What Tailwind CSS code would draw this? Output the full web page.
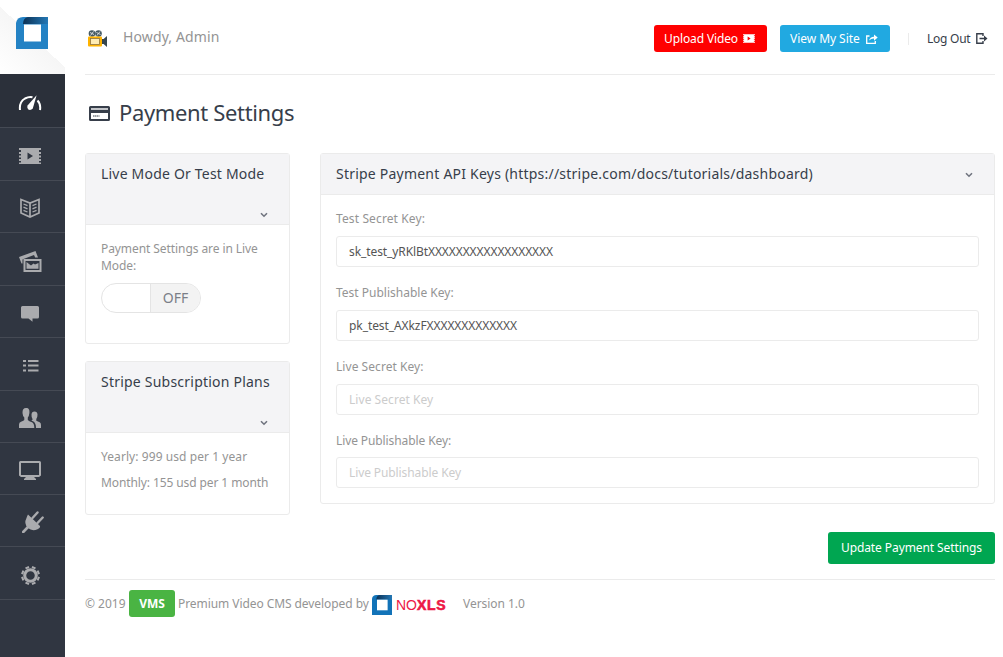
<!DOCTYPE html>
<html lang="en">
<head>
<meta charset="utf-8">
<title>Payment Settings</title>
<script src="https://cdn.jsdelivr.net/npm/@tailwindcss/browser@4"></script>
</head>
<body class="h-[657px] overflow-hidden bg-white font-['Noto_Sans',sans-serif] text-[12px] leading-[17px] text-[#949494]">
<svg class="absolute size-0">
  <defs>
    <linearGradient id="fold" x1="0" y1="0" x2="1" y2="0"><stop offset="0" stop-color="#0b3155"/><stop offset="1" stop-color="#2478b5"/></linearGradient>
    <symbol id="chev" viewBox="0 0 8 6"><path d="M1 1.2 4 4.2 7 1.2" fill="none" stroke="#70747f" stroke-width="1.6"/></symbol>
    <symbol id="logo" viewBox="0 0 32 32"><path d="M7 0H32V32H0V6Q1 0 7 0Z" fill="currentColor"/><path d="M12 0H32V7H7Q7 1 12 0Z" fill="url(#fold)"/><path d="M8 7.5H25V24.5H8Z" fill="#fff"/></symbol>
    <symbol id="film" viewBox="0 0 22 16"><path fill="currentColor" fill-rule="evenodd" d="M0 0H22V2H20V4H22V6H20V7.500H22V9.500H20V11H22V13H20V14.500H22V16H0V14.500H2V13H0V11H2V9.500H0V7.500H2V6H0V4H2V2H0ZM8.500 4.500V11.500L14 8Z"/></symbol>
  </defs>
</svg>
<div class="flex h-full">
  <aside class="flex w-[65px] shrink-0 flex-col bg-[#303641] text-[#aaabae]">
    <div class="h-[74px] bg-white bg-[linear-gradient(43deg,#fff_0%,#f6f6f6_50%,#fff_50%)] pt-[17px] pl-4"><svg class="size-8 text-[#2482c4]"><use href="#logo"/></svg></div>
    <nav>
      <a class="flex h-[54px] items-center border-b border-[#454a54] bg-[#2b303a] pt-[5px] pl-[18px] text-white"><svg class="h-[16px] w-[24px]" viewBox="0 0 24 16" fill="none" stroke="currentColor" stroke-width="2"><path d="M2 15Q1 7 7 3.500Q11 1.300 14.500 2.200"/><path d="M19.500 5.500Q23 9 22 15"/><path d="M18.600 .3 14.800 13.500Q12.500 16 10 14.300Q8.300 12.500 9.800 10.300Z" fill="currentColor" stroke="none"/></svg></a>
      <a class="flex h-[53px] items-center border-b border-[#454a54] pt-[4px] pl-[19px]"><svg class="h-4 w-[22px]"><use href="#film"/></svg></a>
      <a class="flex h-[52px] items-center border-b border-[#454a54] pt-[3px] pl-[20px]"><svg class="h-[20px] w-[20px]" viewBox="0 0 20 20" fill="none" stroke="currentColor" stroke-width="1.700"><path d="M1 1.500 10 5 19 1.500V15L10 19 1 15ZM10 5V19"/><path d="M3.500 6 7.500 7.600M3.500 9.200 7.500 10.800M3.500 12.400 7.500 14M16.500 6 12.500 7.600M16.500 9.200 12.500 10.800M16.500 12.400 12.500 14" stroke-width="1.300"/></svg></a>
      <a class="flex h-[53px] items-center border-b border-[#454a54] pt-[4px] pl-[19px]"><svg class="h-[21px] w-[23px]" viewBox="0 0 23 21"><path fill="currentColor" d="M0 6 16.500 0 19 6.500H16.200L15 4 4.500 8 3.500 8.500V12.500H2.500Z"/><path fill="currentColor" fill-rule="evenodd" d="M4.500 8H22.500V21H4.500ZM6.500 10V19H20.500V10Z"/><path fill="currentColor" d="M7.500 11 10 13 12 14.500 14.500 12.500 16 13.500 19.500 12V17.800H7.500Z"/></svg></a>
      <a class="flex h-[52px] items-center border-b border-[#454a54] pt-[4px] pl-[21px]"><svg class="h-[16px] w-[18px]" viewBox="0 0 18 16" fill="currentColor"><path d="M1.500 0H16.500Q18 0 18 1.500V11Q18 12.500 16.500 12.500H11.500V15.700L7.500 12.500H1.500Q0 12.500 0 11V1.500Q0 0 1.500 0Z"/></svg></a>
      <a class="flex h-[53px] items-center border-b border-[#454a54] pt-[3px] pl-[23px]"><svg class="h-[12px] w-[16px]" viewBox="0 0 16 12" fill="currentColor"><path d="M0 0H3V2H0ZM5 0H15.500V2H5ZM0 4.500H3V6.500H0ZM5 4.500H15.500V6.500H5ZM0 9.500H3V11.500H0ZM5 9.500H15.500V11.500H5Z"/></svg></a>
      <a class="flex h-[52px] items-center border-b border-[#454a54] pt-[3px] pl-[19px]"><svg class="h-[20px] w-[22px]" viewBox="0 0 22 20" fill="currentColor"><path d="M7 0C10 0 10.700 2 10.400 5Q10 8.500 8.800 9.500V12Q10 13.300 13 14.300Q15.300 15.200 15.300 20H0V16.500Q0 14.500 2 13.800Q5 12.800 5.300 12V9.500Q3.700 8 3.500 5Q3.300 0 7 0Z"/><path d="M12.300 12.500Q13.500 12 13.600 11.300Q12.300 9.500 12.500 6.500Q12.700 3.500 15.500 3.500T18.500 6.500Q18.600 9.500 17.300 11V12.700L20.700 14.300Q22 15 22 17V20H17Q17 15 14.500 13.500Z"/></svg></a>
      <a class="flex h-[52px] items-center border-b border-[#454a54] pt-[3px] pl-[19px]"><svg class="h-[19px] w-[22px]" viewBox="0 0 22 19" fill="currentColor"><path fill-rule="evenodd" d="M1.500 0H20.500Q22 0 22 1.500V14.500L20 16H15L17 18V19H5V18L7 16H2L0 14.500V1.500Q0 0 1.500 0ZM2 2V14H20V2Z"/></svg></a>
      <a class="flex h-[52px] items-center border-b border-[#454a54] pt-[3px] pl-[22px]"><svg class="size-[22px]" viewBox="0 0 22 22" fill="none" stroke="currentColor" stroke-linecap="round"><path d="M6 3.500 18 15Q18.500 17 15.500 18.300 10 20.500 6 17 1.500 12.500 4.500 7 5 5 6 3.500Z" fill="currentColor" stroke="none"/><path d="M10.500 7 15.500 1.500M15.500 12 20.700 6.500" stroke-width="2.400"/><path d="M1.200 21 6 16" stroke-width="2.600"/></svg></a>
      <a class="flex h-[53px] items-center border-b border-[#454a54] pt-[5px] pl-[21px]"><svg class="size-[19px]" viewBox="-10 -10 20 20" fill="none" stroke="currentColor"><circle r="6.100" stroke-width="3.200"/><path stroke-width="4" d="M3 -7.200 3.800 -9.200M7.200 -3 9.200 -3.800M7.200 3 9.200 3.800M3 7.200 3.800 9.200M-3 7.200-3.800 9.200M-7.200 3-9.200 3.800M-7.200-3-9.200-3.800M-3-7.200-3.800-9.200"/></svg></a>
    </nav>
  </aside>
  <main class="ml-5 flex w-[910px] flex-col">
    <header class="flex h-[75px] items-start border-b border-[#ebebeb]">
      <svg class="mt-[30px] ml-[3px] h-[17px] w-[20px]" viewBox="0 0 20 17"><path fill="#37474f" d="M19 6V17L15 13.500V9.500ZM14 9H16V14H14Z"/><circle cx="4" cy="3.500" r="3.300" fill="#455a64"/><circle cx="10.500" cy="3.500" r="3.300" fill="#455a64"/><path stroke="#d5d9db" stroke-width="1" d="M2 2.500 6 4.500M5.500 1.500 2.500 5.500M8.500 2.500 12.500 4.500M12 1.500 9 5.500"/><rect x="0" y="6.500" width="14" height="10" rx="1" fill="#ffb300"/><rect x="2.500" y="8.500" width="9" height="6" fill="#ffecb3" stroke="#8d7442" stroke-width=".8"/></svg>
      <span class="mt-[27px] ml-[15px] text-[14px] leading-[20px] tracking-[0.12px]">Howdy, Admin</span>
      <div class="ml-auto flex items-center pt-[25px]">
        <a class="flex h-[27px] w-[113px] items-center rounded-[3px] bg-[#f00] pl-[10px] tracking-[-0.12px] text-white">Upload Video<svg class="ml-[5px] h-[9px] w-[12px]"><use href="#film"/></svg></a>
        <a class="ml-[13px] flex h-[27px] w-[110px] items-center rounded-[3px] bg-[#21a9e1] pl-[10px] tracking-[-0.05px] text-white">View My Site<svg class="ml-[6px] h-[10px] w-[12px]" viewBox="0 0 12 10" fill="none" stroke="currentColor" stroke-width="1.300"><path d="M3.500 2H.7V9.300H9.300V7"/><path d="M3 6.500Q4 2.700 8 2.700V.5L11.700 3.600 8 6.700V4.500Q5 4.500 3 6.500Z" fill="currentColor" stroke="none"/></svg></a>
        <span class="ml-[18px] h-3 w-px bg-[#ebebeb]"></span>
        <a class="ml-[18px] flex w-[68px] items-center tracking-[-0.25px] text-[#373e4a]">Log Out<svg class="ml-[6px] h-[11px] w-[12px]" viewBox="0 0 12 11" fill="none" stroke="currentColor" stroke-width="1.400"><path d="M7 3V.8H.8V10.200H7V8"/><path d="M3.500 4.700H8V2.500L11.500 5.500 8 8.500V6.300H3.500Z" fill="currentColor" stroke="none"/></svg></a>
      </div>
    </header>
    <h2 class="mt-[22px] flex h-[30px] items-center pl-1 text-[22px] leading-[30px] tracking-[-0.35px] text-[#373e4a]"><svg class="mt-[3px] mr-[9px] h-[15px] w-[21px]" viewBox="0 0 21 15"><path fill="currentColor" fill-rule="evenodd" d="M1.500 0H19.500Q21 0 21 1.500V13.500Q21 15 19.500 15H1.500Q0 15 0 13.500V1.500Q0 0 1.500 0ZM2 2V4H19V2ZM2 7V13H19V7Z"/><path fill="#c3c5c9" d="M2 2H19V4H2Z"/><path stroke="currentColor" stroke-width="1" d="M4 10H10.500" stroke-dasharray="1.500 .4"/></svg>Payment Settings</h2>
    <div class="mt-[26px] flex items-start gap-[30px]">
      <div class="flex w-[205px] flex-col gap-[17px]">
        <section class="h-[191px] rounded-[3px] border border-[#ebebeb]">
          <div class="flex h-[71px] flex-col border-b border-[#ebebeb] bg-[#f4f4f6] px-[15px] pt-[10px]"><h3 class="text-[14px] leading-5 tracking-[0.2px] text-[#373e4a]">Live Mode Or Test Mode</h3><svg class="mt-[28px] mr-[6.5px] h-[6px] w-[8px] self-end"><use href="#chev"/></svg></div>
          <div class="px-[15px] pt-[15px]"><p class="tracking-[-0.08px]">Payment Settings are in Live Mode:</p>
            <div class="mt-[9px] flex h-[30px] w-[100px] overflow-hidden rounded-full border border-[#e4e4e4]"><span class="w-[49px] border-r border-[#e4e4e4]"></span><span class="flex-1 bg-[#f3f3f3] text-center text-[14px] leading-[28px] text-[#7b7f88]">OFF</span></div>
          </div>
        </section>
        <section class="h-[154px] rounded-[3px] border border-[#ebebeb]">
          <div class="flex h-[71px] flex-col border-b border-[#ebebeb] bg-[#f4f4f6] px-[15px] pt-[10px]"><h3 class="text-[14px] leading-5 tracking-[0.22px] whitespace-nowrap text-[#373e4a]">Stripe Subscription Plans</h3><svg class="mt-[28px] mr-[6.5px] h-[6px] w-[8px] self-end"><use href="#chev"/></svg></div>
          <div class="flex flex-col gap-[9px] px-[15px] pt-[15px]"><p class="tracking-[0.07px]">Yearly: 999 usd per 1 year</p><p class="tracking-[-0.1px]">Monthly: 155 usd per 1 month</p></div>
        </section>
      </div>
      <section class="h-[351px] w-[675px] rounded-[3px] border border-[#ebebeb]">
        <div class="flex h-[41px] items-center justify-between border-b border-[#ebebeb] bg-[#f4f4f6] pr-[21.5px] pl-[15px]"><h3 class="text-[14px] leading-5 tracking-[0.22px] text-[#373e4a]">Stripe Payment API Keys (https://stripe.com/docs/tutorials/dashboard)</h3><svg class="mt-[2px] h-[6px] w-[8px]"><use href="#chev"/></svg></div>
        <div class="px-[15px] pt-[15px]">
          <label class="block tracking-[0.12px]">Test Secret Key:</label>
          <div class="mt-[9px] h-[31px] rounded-[3px] border border-[#ebebeb] px-3 leading-[29px] tracking-[-0.09px] text-[#555]">sk_test_yRKlBtXXXXXXXXXXXXXXXXXX</div>
          <label class="mt-[17px] block">Test Publishable Key:</label>
          <div class="mt-[9px] h-[31px] rounded-[3px] border border-[#ebebeb] px-3 leading-[29px] tracking-[-0.08px] text-[#555]">pk_test_AXkzFXXXXXXXXXXXXX</div>
          <label class="mt-[17px] block tracking-[0.05px]">Live Secret Key:</label>
          <div class="mt-[9px] h-[31px] rounded-[3px] border border-[#ebebeb] px-3 leading-[29px] tracking-[0.05px] text-[#ccc]">Live Secret Key</div>
          <label class="mt-[17px] block tracking-[-0.1px]">Live Publishable Key:</label>
          <div class="mt-[8px] h-[31px] rounded-[3px] border border-[#ebebeb] px-3 leading-[29px] tracking-[-0.1px] text-[#ccc]">Live Publishable Key</div>
        </div>
      </section>
    </div>
    <a class="mt-[17px] flex h-[32px] w-[167px] items-center justify-center self-end rounded-[3px] bg-[#00a651] pb-[2px] tracking-[-0.09px] text-white">Update Payment Settings</a>
    <footer class="mt-[15px] flex items-center border-t border-[#ebebeb] pt-[10px]">
      <span class="w-[44px]">© 2019</span><span class="h-[27px] w-[46px] rounded-[3px] bg-[#4ab443] text-center leading-[27px] font-bold text-white">VMS</span><span class="ml-[3px] w-[194px] tracking-[-0.07px] whitespace-nowrap">Premium Video CMS developed by</span>
      <svg class="mt-[3px] size-5 text-[#1273b8]"><use href="#logo"/></svg><span class="mt-[3px] ml-1 w-[67px] font-['Liberation_Sans',sans-serif] text-[14px] text-[#ed1846]">NO<b class="tracking-[0.7px] [-webkit-text-stroke:0.6px_#ed1846]">XLS</b></span><span class="tracking-[-0.05px]">Version 1.0</span>
    </footer>
  </main>
</div>
</body>
</html>
